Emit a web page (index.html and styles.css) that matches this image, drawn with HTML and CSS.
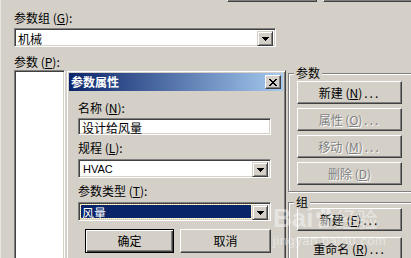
FILE: index.html
```html
<!DOCTYPE html>
<html lang="zh-CN">
<head>
    <meta charset="UTF-8">
    <title>参数属性</title>
    <link rel="stylesheet" href="styles.css">
</head>
<body>
    <div class="screen">
        <div class="top-buttons">
            <span class="stub stub-a"></span>
            <span class="stub stub-b"></span>
        </div>
        <div class="main">
            <div class="left-col">
                <div class="label">参数组 (<u>G</u>):</div>
                <div class="combo combo-group">
                    <span class="combo-value">机械</span>
                    <span class="drop"><svg width="7" height="4"><rect x="0" y="0" width="7" height="1"/><rect x="1" y="1" width="5" height="1"/><rect x="2" y="2" width="3" height="1"/><rect x="3" y="3" width="1" height="1"/></svg></span>
                </div>
                <div class="label label-params">参数 (<u>P</u>):</div>
                <div class="listbox"></div>
            </div>
            <div class="right-col">
                <div class="group group-params">
                    <span class="group-title">参数</span>
                    <button class="btn">新建 (<u>N</u>)<span class="dots">...</span></button>
                    <button class="btn disabled">属性 (<u>O</u>)<span class="dots">...</span></button>
                    <button class="btn disabled">移动 (<u>M</u>)<span class="dots">...</span></button>
                    <button class="btn disabled">删除 (<u>D</u>)</button>
                </div>
                <div class="group group-groups">
                    <span class="group-title">组</span>
                    <button class="btn">新建 (<u>F</u>)<span class="dots">...</span></button>
                    <button class="btn">重命名 (<u>R</u>)<span class="dots">...</span></button>
                </div>
            </div>
        </div>

        <div class="dialog">
            <div class="titlebar">
                <span class="title">参数属性</span>
                <span class="close"><svg width="8" height="7"><path d="M0 0h2v1H0zM6 0h2v1H6zM1 1h2v1H1zM5 1h2v1H5zM2 2h4v1H2zM3 3h2v1H3zM2 4h4v1H2zM1 5h2v1H1zM5 5h2v1H5zM0 6h2v1H0zM6 6h2v1H6z"/></svg></span>
            </div>
            <div class="dialog-body">
                <div class="label">名称 (<u>N</u>):</div>
                <div class="edit">设计给风量</div>
                <div class="label">规程 (<u>L</u>):</div>
                <div class="combo">
                    <span class="combo-value latin">HVAC</span>
                    <span class="drop"><svg width="7" height="4"><rect x="0" y="0" width="7" height="1"/><rect x="1" y="1" width="5" height="1"/><rect x="2" y="2" width="3" height="1"/><rect x="3" y="3" width="1" height="1"/></svg></span>
                </div>
                <div class="label">参数类型 (<u>T</u>):</div>
                <div class="combo">
                    <span class="combo-value selected">风量</span>
                    <span class="drop"><svg width="7" height="4"><rect x="0" y="0" width="7" height="1"/><rect x="1" y="1" width="5" height="1"/><rect x="2" y="2" width="3" height="1"/><rect x="3" y="3" width="1" height="1"/></svg></span>
                </div>
                <div class="dialog-actions">
                    <button class="btn btn-default">确定</button>
                    <button class="btn btn-cancel">取消</button>
                </div>
            </div>
        </div>

        <div class="watermark">
            <div class="wm-logo">Bai<svg width="20" height="22" viewBox="0 0 22 24"><ellipse cx="5" cy="9" rx="2.5" ry="3.5"/><ellipse cx="10" cy="4" rx="2.5" ry="3.5"/><ellipse cx="16" cy="5" rx="2.5" ry="3.5"/><ellipse cx="19" cy="11" rx="2.2" ry="3"/><path d="M5 20c0-5 4-9 7-9s6 4 6 8c0 3-3 4-6 3-3 1-7 2-7-2z"/></svg><span class="wm-cn">经验</span></div>
            <div class="wm-url">jingyan.baidu.com</div>
        </div>
    </div>
</body>
</html>
```

FILE: styles.css
```css
* {
    box-sizing: border-box;
}
body {
    margin: 0;
    background: #d4d0c8;
    font: 12px "Noto Sans CJK SC", sans-serif;
    color: #000;
}
u {
    text-decoration: underline;
}
.screen {
    position: relative;
    width: 411px;
    height: 258px;
    overflow: hidden;
    border-left: 1px solid #e8e6e0;
}

/* buttons cut off at the top edge */
.top-buttons {
    display: flex;
    height: 2px;
    padding-left: 226px;
}
.stub {
    flex: none;
    height: 2px;
    background: #d4d0c8;
    border-left: 1px solid #fff;
    border-right: 1px solid #404040;
    border-bottom: 1px solid #404040;
    box-shadow: inset 0 -1px #808080;
}
.stub-a {
    width: 90px;
}
.stub-b {
    width: 100px;
    margin-left: 6px;
}

.main {
    display: flex;
    padding-left: 13px;
}
.left-col {
    flex: none;
    width: 262px;
    padding-top: 8px;
}
.label {
    height: 16px;
    line-height: 16px;
    white-space: nowrap;
}
.label-params {
    margin-top: 7px;
}

/* combo boxes and edits */
.combo,
.edit {
    display: flex;
    background: #fff;
    border: 1px solid;
    border-color: #808080 #fff #fff #808080;
    box-shadow: inset 1px 1px #404040, inset -1px -1px #d4d0c8;
    padding: 2px;
}
.combo {
    height: 19px;
    margin-top: 2px;
}
.combo-value {
    flex: 1;
    line-height: 15px;
    padding-left: 1px;
    white-space: nowrap;
}
.combo-value.latin {
    font-family: "Liberation Sans Narrow", "Liberation Sans", sans-serif;
    font-size: 11px;
    padding-left: 2px;
}
.combo-value.selected {
    background: #0a246a;
    color: #fff;
    outline: 1px dotted #f3dd8e;
    margin-right: 1px;
}
.drop {
    flex: none;
    width: 16px;
    height: 15px;
    display: flex;
    align-items: center;
    justify-content: center;
    background: #d4d0c8;
    border: 1px solid;
    border-color: #d4d0c8 #404040 #404040 #d4d0c8;
    box-shadow: inset 1px 1px #fff, inset -1px -1px #808080;
    padding-top: 1px;
}
.drop svg {
    fill: #000;
    display: block;
}
.edit {
    height: 17px;
    margin-top: 2px;
    line-height: 13px;
    padding-left: 3px;
}
.listbox {
    height: 200px;
    width: 51px;
    background: #fff;
    border: 1px solid;
    border-color: #808080 #fff #fff #808080;
    box-shadow: inset 1px 1px #404040, inset -1px -1px #d4d0c8;
}

/* right side group boxes */
.right-col {
    flex: none;
    margin-left: 12px;
    padding-top: 71px;
}
.group {
    position: relative;
    width: 140px;
    border: 1px solid #808080;
    box-shadow: 1px 1px 0 #fff, inset 1px 1px 0 #fff;
    padding: 7px 0 6px 8px;
    display: flex;
    flex-direction: column;
    gap: 4px;
}
.group-groups {
    margin-top: 10px;
    padding-top: 5px;
    gap: 6px;
}
.group-title {
    position: absolute;
    top: -8px;
    left: 5px;
    padding: 0 2px;
    background: #d4d0c8;
    line-height: 14px;
}

.btn {
    flex: none;
    width: 105px;
    height: 23px;
    padding: 0;
    background: #d4d0c8;
    border: 1px solid;
    border-color: #fff #404040 #404040 #fff;
    box-shadow: inset -1px -1px #808080;
    font: 12px "Noto Sans CJK SC", sans-serif;
    color: #000;
    line-height: 20px;
    white-space: nowrap;
}
.btn .dots {
    letter-spacing: 2px;
    margin-left: 2px;
}
.btn.disabled {
    color: #808080;
    text-shadow: 1px 1px 0 #fff;
}

/* the dialog window lying over the page */
.dialog {
    position: absolute;
    left: 65px;
    top: 70px;
    width: 220px;
    height: 200px;
    background: #d4d0c8;
    border: 1px solid;
    border-color: #d4d0c8 #404040 #404040 #d4d0c8;
    box-shadow: inset 1px 1px #fff, inset -1px -1px #808080;
    padding: 2px;
}
.titlebar {
    height: 18px;
    display: flex;
    align-items: center;
    justify-content: space-between;
    background: linear-gradient(to right, #0a246a, #a6caf0);
    padding: 0 2px 0 2px;
}
.title {
    color: #fff;
    font-weight: bold;
    font-size: 12px;
    line-height: 18px;
}
.close {
    width: 16px;
    height: 14px;
    display: flex;
    align-items: center;
    justify-content: center;
    background: #d4d0c8;
    border: 1px solid;
    border-color: #fff #404040 #404040 #fff;
    box-shadow: inset -1px -1px #808080;
}
.close svg {
    display: block;
    fill: #000;
}
.dialog-body {
    padding: 9px 12px 0 9px;
}
.dialog-body .label {
    margin-top: 5px;
}
.dialog-body .label:first-child {
    margin-top: 0;
}
.dialog-body .combo {
    margin-top: 3px;
}
.dialog-actions {
    display: flex;
    gap: 6px;
    margin-top: 8px;
    padding-left: 7px;
}
.dialog-actions .btn {
    height: 24px;
    line-height: 22px;
}
.btn-default {
    width: 89px;
    border: 1px solid #000;
    box-shadow: inset 1px 1px #fff, inset -1px -1px #404040, inset -2px -2px #808080;
}
.btn-cancel {
    width: 91px;
}

/* faint site watermark */
.watermark {
    position: absolute;
    left: 272px;
    top: 203px;
    color: rgba(255, 255, 255, 0.45);
    pointer-events: none;
}
.wm-logo {
    display: flex;
    align-items: center;
    font: bold 26px "Liberation Sans", sans-serif;
    line-height: 30px;
}
.wm-logo svg {
    fill: rgba(255, 255, 255, 0.45);
    margin: 0 1px;
}
.wm-cn {
    font: 21px "Noto Sans CJK SC", sans-serif;
}
.wm-url {
    font: 13px "Liberation Sans", sans-serif;
    letter-spacing: 0.5px;
}
```
